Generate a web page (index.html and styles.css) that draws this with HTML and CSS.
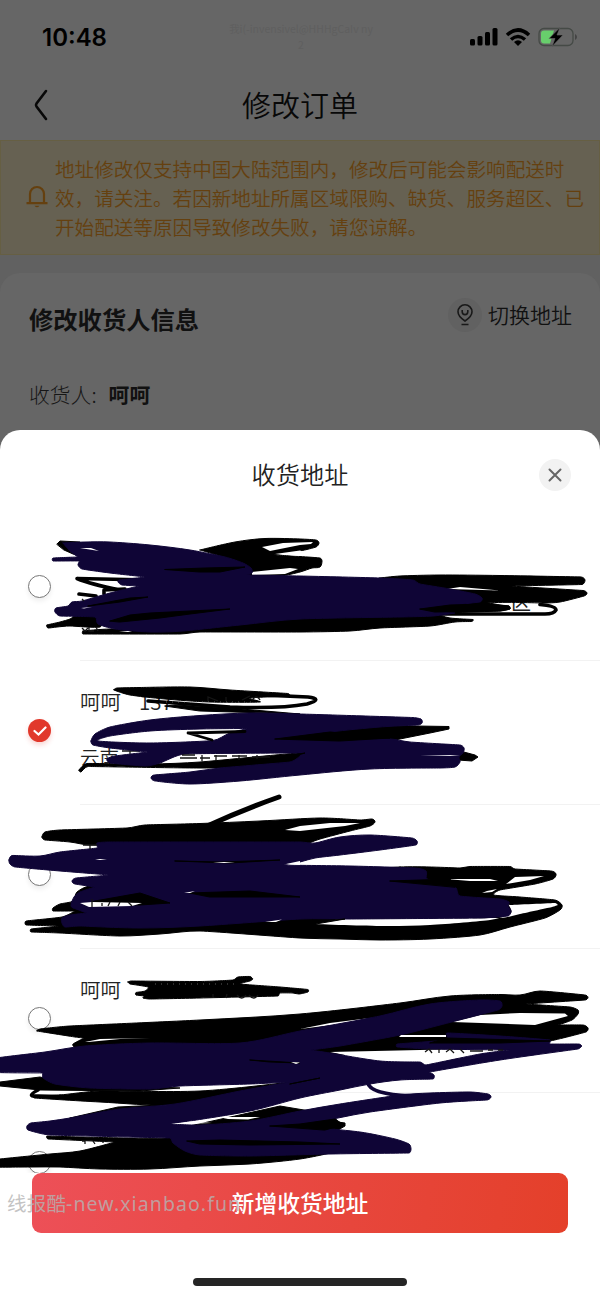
FILE: index.html
```html
<!DOCTYPE html>
<html lang="zh-CN">
<head>
<meta charset="utf-8">
<title>修改订单</title>
<link rel="stylesheet" href="styles.css">
</head>
<body>
<div class="screen">
  <div class="page">
    <div class="status">
      <span class="time">10:48</span>
      <span class="faint">我i(-invensivel@HHHgCaIv ny<br>2</span>
      <svg class="status-icons" width="108" height="20" viewBox="470 27 108 20">
        <g fill="#000"><rect x="470" y="39" width="5" height="6.500" rx="1.500"/><rect x="477.500" y="36" width="5" height="9.500" rx="1.500"/><rect x="485" y="32" width="5" height="13.500" rx="1.500"/><rect x="492.500" y="28" width="5" height="17.500" rx="1.500"/></g>
        <g fill="none" stroke="#000" stroke-width="3.600"><path d="M507 35Q518 25 529 35"/><path d="M511 39.500Q518 33.500 525 39.500"/></g>
        <path d="M514 42Q518 38.500 522 42L518 46Z"/>
        <rect x="539" y="28.500" width="34" height="17" rx="5" fill="none" stroke="#454a46" stroke-width="1.300"/>
        <path d="M544 30.500h10l-4 13h-6q-3 0-3-3v-7q0-3 3-3z" fill="#68ce6c"/>
        <path d="M575 34q2 1 2 3t-2 3z" fill="#444"/>
        <path d="M560 27.500L549 38.500h6L552 46.500 563 35h-6z" stroke="#666" stroke-width=".6"/>
      </svg>
    </div>
    <div class="nav">
      <svg class="back" width="16" height="32" viewBox="0 0 16 32"><path d="M13 2L3.500 14.500q-1 1.500 0 3L13 30" fill="none" stroke="#080808" stroke-width="2.600" stroke-linecap="round"/></svg>
      <span class="nav-title">修改订单</span>
    </div>
    <div class="notice">
      <svg class="bell" width="22" height="24" viewBox="0 0 22 24"><path d="M4 18V9a7 7 0 0 1 14 0v9M0.500 18.200h21" fill="none" stroke="#65400f" stroke-width="2.200"/><path d="M8.500 20.800h5q-2.500 3-5 0z" fill="#65400f"/></svg>
      <p class="notice-text">地址修改仅支持中国大陆范围内，修改后可能会影响配送时<br>效，请关注。若因新地址所属区域限购、缺货、服务超区、已<br>开始配送等原因导致修改失败，请您谅解。</p>
    </div>
    <div class="card">
      <div class="card-head">
        <h2>修改收货人信息</h2>
        <div class="switch">
          <span class="pin"><svg width="20" height="24" viewBox="0 0 20 24"><path d="M10 18Q3 13.500 3 8.800a7 7 0 0 1 14 0Q17 13.500 10 18zM7.200 7v1.800a2.800 2.800 0 0 0 5.600 0V7M6.500 21.500h7" fill="none" stroke="#191919" stroke-width="1.600"/></svg></span>
          <span>切换地址</span>
        </div>
      </div>
      <div class="person"><span>收货人:</span><b>呵呵</b></div>
    </div>
  </div>

  <div class="sheet">
    <div class="sheet-head">
      <span>收货地址</span>
      <span class="close"><svg width="14" height="14" viewBox="0 0 14 14"><path d="M1.500 1.500l11 11M12.500 1.500l-11 11" stroke="#666" stroke-width="2" stroke-linecap="round"/></svg></span>
    </div>
    <div class="list">
      <div class="row"><i class="radio"></i><div class="info"></div></div>
      <div class="row"><i class="radio on"><svg width="14" height="12" viewBox="0 0 14 12"><path d="M1.500 6l4 3.500L12.500 2.500" fill="none" stroke="#fff" stroke-width="2.200" stroke-linecap="round"/></svg></i><div class="info"><div class="name"><span>呵呵</span><span class="tel">137</span></div><div class="addr">云南</div></div></div>
      <div class="row"><i class="radio"></i><div class="info"></div></div>
      <div class="row"><i class="radio"></i><div class="info"><div class="name"><span>呵呵</span></div></div></div>
      <div class="row"><i class="radio"></i><div class="info"></div></div>
      <svg class="ink" width="600" height="657" viewBox="0 516 600 657">
        <!-- first address -->
        <text x="511" y="609.500" class="peek">区</text>
        <g class="k">
          <path d="M57 544L60 541 80 542 85 556 73 554 64 550zM200 550L235 542 265 538.500 300 539 316 540 319 543 316 547 300 551 274 555 300 556.500 320 558 322 561 320 567 312 568 300 572 280 576 250 576 230 560z"/>
          <path d="M47 625L60 622 70 619 75 616 100 616 100 627 70 626 57 627 48 628zM83 631L110 629 183 629 300 615 433 614 450 618 473 619.500 472 621.500 455 622 430 626 380 628 350 631 300 632 200 632 180 634 83 634z"/>
          <path d="M380 578L400 576 440 575 500 575.500 581 577 585 580 582 584.500 510 586 583 590.500 587 593 584 596 560 602 543 603 487 603 430 612 400 610z"/>
          <path class="line" d="M150 580L77 578.500Q90 584 120 590M79 594L96 596M104 594V590L125 589M540 604.500Q556 606 556 610Q554 614 545 614L435 614"/>
          <path d="M420 609L450 604 487 603 500 605 509 606 510 609 500 611 435 613z"/>
        </g>
        <path class="w" d="M447 589L460 587 500 590.500zM262 547L283 543 313 542 311 544 300 545 270 551zM275 554L300 550.500 306 553 300 556zM252 572L290 568 298 569 285 574 252 575z"/>
        <g class="n">
          <path d="M63 543L85 542 110 542 150 545 190 550 225 557 243 563 251 568 252 573 247 575 300 576 380 578 413 580 420 584 450 589 475 594 482 598 480 602 420 609 455 613 433 616 400 617 300 619 240 625 183 631 150 632 115 629 98 624 95 617 60 616 55 612 56 608 68 606 72 602 82 601 110 593 139 586 122 585 118 582 119 580 146 577 110 573 82 569 78 565 79 561 53 561 53 558 78 557 70 551z"/>
        </g>
        <g class="k"><path d="M110 621L130 615 150 613 230 609 190 614 160 618 120 622zM165 569.500L205 568 245 567 220 572 200 572zM88 606L130 598 148 597 120 602zM420 609L450 605 487 604 509 606 510 609 500 611 435 612z"/></g>
        <path class="w" d="M80 548L91 548 99 551zM81 608L92 607 84 608.500zM119 631L132 631 128 632z"/>
        <path class="mark" d="M82 599l2 2M82 628l3 3 3-3M89 627v4h5M96 627l2 4"/>
        <!-- second address -->
        <g class="k">
          <path d="M114 690L117 688 140 687.500 190 687 230 690 288 693.500 290 696 250 698 260 702 210 702 165 699 130 695zM165 706L175 705 230 708 300 714 200 711z"/>
          <path class="line" d="M240 694L308 697Q324 699 307 704Q280 709 230 707L148 701"/>
          <path d="M79 770L87 763.500 150 764 200 762 300 753 300 767 200 768 88 766.500 81 772zM280 738L350 725 449 726.500 449 729 430 733 395 740zM460 751L475 755 478 757 472 761 458 760z"/>
        </g>
        <path class="mark" d="M122 751h18M130 751v5"/>
        <path class="n" fill-rule="evenodd" d="M91 741L95 734 110 727 150 720 200 715.500 250 713 300 714 412 717.500 421 719 422 723 418 725 380 727 330 732 285 739 330 739 390 739 410 742 460 745 464 748 463 753 459 757 460 762 455 767 440 768 370 769 300 775 240 781 190 784 155 781 151 778 154 775 190 772 220 768 290 762 300 756 300 753 185 754 160 763 145 766 110 763 107 759 115 756 148 752 110 748 93 745zM98 741L110 736 150 731 200 729 248 728.500 230 733 213 740.500 150 743z"/>
        <path class="mark" d="M180 758h17M182 755h13M200 758h10M202 755v6M214 756h13M216 755v6M232 756h15M239 755v5M252 757h18M257 755v4M208 701v-4l10 4M226 697v4M242 700l8-4M252 700q5-6 8 0"/>
        <path class="k" d="M275 739L330 732 390 738 340 741zM280 757L305 753 288 758z"/>
        <path class="k line slim" d="M188 733L245 731.500M188 733L212 740"/>
        <path class="w" d="M420 755.500L460 755 450 756z"/>
        <!-- third address -->
        <path class="k line thick" d="M279 797Q242 810 205 827"/>
        <g class="k">
          <path d="M42 837L45 832 60 830 127 828 145 825 200 823.500 260 821 320 818 360 820 372 819 375 822 370 826 350 831 320 839 300 845 90 845 70 842 45 840z"/>
          <path d="M400 867L460 868 470 866.500 510 866.500 515 869 551 871 556 874 553 879 535 884 500 890 494 895 520 897 555 900 562 905 560 910 545 918 510 927 480 935 430 939 380 940 340 939 300 938 200 931 160 934 120 936 60 933 31 932 31 929 60 926 26 925 26 921 62 917 75 911 53 911 53 908 60 904 73 901 77 892 90 886z"/>
        </g>
        <path class="w" d="M310 924L345 919 500 918 520 914 552 907 558 905 555 903 510 905 507 903 511 913 490 920 430 925 380 926zM300 826L330 823 360 823 345 826 300 831 285 830zM446 879L490 879 498 881 470 881zM506 884L515 877 544 876 530 880zM482 893L487 891 497 889 492 892z"/>
        <path class="n" d="M9 860L11 856 15 855.500 40 856 60 852 97 848 97 843 110 842 300 842 315 843 340 837 370 835 412 838 417 841 416 845 380 850 340 855 315 858 300 862 285 865 350 866 415 868 426 871 427 879 455 887 460 896 500 899 509 902 508 906 511 911 508 916 480 918 350 919 300 919 200 926 140 928 80 926 65 927 62 923 62 918 70 915 87 913 76 909 71 906 74 897 80 892 95 887 75 884 72 881 76 878 110 875 60 871 15 867 10 864z"/>
        <path class="k" d="M190 893L250 891 300 897 210 897zM95 901L140 893 170 903 140 905 85 905zM175 861L230 863 280 860 220 862zM390 881L450 879 455 887zM300 923L345 919 310 925 270 923z"/>
        <path class="w" d="M213 862L235 862 224 863zM95 859L107 859 100 860zM286 864L300 861 300 865zM184 893L195 891 190 893zM265 922L282 919.500 276 922zM80 903L92 902 142 903 132 906 89 907z"/>
        <path class="mark" d="M83 845h14M90 845v4M92 899v8M102 903v3M110 902l-2 4M120 902l-2 4M128 902l4 4"/>
        <!-- fourth and fifth address -->
        <g class="k">
          <path d="M128 982L131 981 200 981.500 233 980 238 977 250 976.500 253 979 250 981 241 984 280 987 308 989.500 308 992 299 994 293 993 280 993 278 996 200 998 150 999 143 998 144 996 136 995 136 992.500 145 991 148 987 130 984z"/>
          <path d="M37 1031L40 1029 70 1026 200 1020 300 1014 400 1003 450 996 500 994.500 520 995 540 991 585 995 588 997.500 585 1000 525 1004 570 1007 578 1010 578 1014 572 1020 558 1025 583 1025 588 1028 586 1032 550 1041 500 1050 400 1053 300 1055 80 1050 74 1047 73 1044 84 1038 75 1037z"/>
          <path d="M0 1082L40 1077 60 1082 180 1088 140 1091 40 1090 0 1086zM60 1095L100 1091 200 1091 290 1082 260 1095 175 1105 100 1102 34 1098 34 1096zM70 1118L118 1107 160 1105 160 1118zM235 1116L280 1106 310 1111 270 1124 190 1126zM290 1124L335 1118 338 1122 345 1123 345 1126 338 1130 300 1131z"/>
          <path d="M-9 1160L50 1154 80 1151 115 1142 48 1139 47 1136 170 1138 300 1130 335 1152 300 1159 250 1164 200 1166 150 1169 100 1169 60 1167 32 1167 -9 1167z"/>
          <path class="line" d="M38 1090Q25 1097 38 1096L80 1097"/>
        </g>
        <path class="w" d="M300 1029L330 1023 370 1018 340 1024zM452 1022L480 1015 520 1013 565 1013.500 568 1016 535 1025zM330 1052L511 1048 430 1067 380 1062z"/>
        <path class="n" d="M-9 1059L45 1052 85 1046 150 1043 240 1043 300 1031 380 1016 430 1004 480 1000 500 1001 502 1006 498 1010 440 1025 400 1035 340 1046 310 1050 330 1053 380 1061 420 1062 426 1065 480 1054 510 1050 430 1049 397 1047 397 1044 447 1040 447 1033 500 1036 550 1040 550 1044 579 1044 582 1046 578 1049 500 1060 430 1072 434 1075 433 1079 400 1080 370 1084 340 1090 300 1098 250 1111 190 1121 171 1124 200 1125 250 1121 300 1111 340 1104 400 1095 430 1093 470 1092 488 1094 491 1097 487 1100 440 1103 370 1112 338 1118 300 1126 360 1132 395 1139 409 1144 411 1149 409 1153 330 1154 250 1156 200 1155 185 1151 173 1143 170 1138 50 1135 28 1130 27 1126 31 1123 50 1121 70 1118 120 1109 175 1104 240 1091 290 1082 250 1084 180 1086 150 1089 90 1088 55 1084 43 1078 42 1073 -9 1072z"/>
        <path class="n thin" d="M368 1083Q370 1094 410 1096"/>
        <path class="k" d="M447 1038L550 1041 500 1043 430 1043zM187 1141L220 1140 300 1142 340 1144 250 1145 200 1144zM270 1126L300 1124 335 1119 344 1125 325 1130zM250 1060L300 1063 270 1062zM290 1084L320 1078 300 1082z"/>
        <path class="w" d="M401 1035L446 1035 446 1037 399 1037zM85 1042L100 1039 150 1038 120 1039 88 1042zM171 1124L190 1121.500 212 1123 180 1124zM218 1117L260 1117 248 1119.500 228 1119zM291 1062L300 1062.500 296 1064z"/>
        <path class="mark" d="M425 1052l4-3 3 4M439 1049v4M446 1052l4-3 4 4M460 1049l4 4M470 1051h13M488 1050h5M498 1050h5M82 1141h3v3M93 1141l2 3M103 1141v2M213 994v4M227 994l-1 4M237 995q5 6 9 0M249 995q5 6 9 0"/>
        <path class="speck" d="M155 984h80M166 702h88"/>
      </svg>
    </div>
    <div class="footer">
      <button class="add">新增收货地址</button>
      <span class="mark-text"><span>线报酷</span>-new.xianbao.fun</span>
    </div>
    <div class="home"></div>
  </div>
</div>
<script src="ink.js"></script>
</body>
</html>
```
FILE: ink.js
```js
// Rounds the corners of the large closed ink outlines so they look drawn by a pen.
const dist = (a, b) => Math.hypot(a[0] - b[0], a[1] - b[1]);
const pair = (p) => p.join(' ');

function outline(points) {
  const n = points.length;
  if (n < 8) return 'M' + points.map(pair).join('L') + 'z';
  const tangents = points.map((p, i) => {
    const a = points[(i + n - 1) % n];
    const b = points[(i + 1) % n];
    const span = dist(a, b) || 1;
    // Sharp tips between long edges keep their point.
    const fold = span / (dist(a, p) + dist(p, b));
    const reach = fold < 0.6 ? 0 : Math.min(dist(a, p), dist(p, b)) * 0.33;
    return [(b[0] - a[0]) / span * reach, (b[1] - a[1]) / span * reach];
  });
  let d = 'M' + pair(points[0]);
  for (let i = 0; i < n; i++) {
    const j = (i + 1) % n;
    const [p, q, s, t] = [points[i], points[j], tangents[i], tangents[j]];
    d += `C${p[0] + s[0]} ${p[1] + s[1]} ${q[0] - t[0]} ${q[1] - t[1]} ${q[0]} ${q[1]}`;
  }
  return d + 'z';
}

document.querySelectorAll('.ink path').forEach((path) => {
  const d = path.getAttribute('d');
  if (!/^[MLz\d.\s-]+z$/.test(d)) return;
  path.setAttribute('d', d.split('z').filter(Boolean).map((part) => {
    const v = part.match(/-?[\d.]+/g).map(Number);
    const points = [];
    for (let i = 0; i < v.length; i += 2) points.push([v[i], v[i + 1]]);
    return outline(points);
  }).join(''));
});
```
FILE: styles.css
```css
* { box-sizing: border-box; }
body { margin: 0; font-family: "Noto Sans CJK SC", sans-serif; color: #222; }
.screen { width: 600px; height: 1299px; background: #616161; overflow: hidden; display: flex; flex-direction: column; }
.page { height: 430px; display: flex; flex-direction: column; flex: none; }
.status { height: 70px; background: #666; display: flex; justify-content: space-between; padding: 27px 22px 0 42px; position: relative; }
.time { font: 600 24px/21px Inter, sans-serif; color: #000; letter-spacing: 0; }
.faint { position: absolute; left: 226px; top: 21px; width: 150px; text-align: center; font-size: 10.500px; line-height: 16px; color: #5f5f5f; white-space: nowrap; }
.nav { height: 70px; background: #666; display: flex; align-items: center; justify-content: center; position: relative; }
.back { position: absolute; left: 33px; top: 19px; }
.nav-title { font-size: 29px; font-weight: 350; color: #080808; line-height: 40px; padding-bottom: 3px; }
.notice { height: 115px; background: #666152; border: 1px solid #665f43; display: flex; align-items: center; padding: 0 0 1px 25px; gap: 7px; flex: none; }
.bell { flex: none; }
.notice-text { margin: 0; font-size: 19.6px; line-height: 29px; font-weight: 350; color: #65400f; white-space: nowrap; }
.card { margin-top: 18px; flex: 1; background: #666; border-radius: 20px 20px 0 0; padding: 21px 28px 0 29px; }
.card-head { display: flex; justify-content: space-between; height: 50px; }
h2 { margin: 0; font-size: 24.300px; line-height: 50px; font-weight: 700; color: #111; }
.switch { display: flex; gap: 6px; align-items: center; height: 42px; font-size: 21px; line-height: 30px; color: #111; font-weight: 350; }
.switch > span:last-child { padding-bottom: 2px; }
.pin { width: 34px; height: 34px; border-radius: 50%; background: #616161; display: flex; align-items: center; justify-content: center; }
.person { margin-top: 34px; display: flex; gap: 12px; font-size: 20.8px; line-height: 32px; font-weight: 300; color: #161616; }
.person b { font-weight: 700; color: #111; }
.sheet { height: 869px; background: #fff; border-radius: 20px 20px 0 0; display: flex; flex-direction: column; flex: none; box-shadow: 0 -20px 0 20px #666; clip-path: inset(-1px 0 0 0); }
.sheet-head { height: 87px; line-height: 88px; text-align: center; font-size: 24.200px; font-weight: 350; position: relative; flex: none; }
.close { position: absolute; right: 29px; top: 29px; width: 32px; height: 32px; border-radius: 50%; background: #f2f2f2; display: flex; align-items: center; justify-content: center; }
.list { height: 656px; overflow: hidden; position: relative; flex: none; }
.row { height: 144px; display: flex; padding-left: 28px; }
.radio { width: 23px; height: 23px; border: 1.500px solid #777; border-radius: 50%; margin-top: 58px; flex: none; box-shadow: 0 3px 5px #0001; background: #fff; }
.radio.on { background: #e1382b; border: 0; display: flex; align-items: center; justify-content: center; box-shadow: 0 3px 5px #e1382b33; }
.info { flex: 1; margin-left: 29px; border-bottom: 1px solid #f2f2f2; padding-top: 25px; }
.name { display: flex; gap: 18px; font-size: 20.5px; line-height: 30px; height: 30px; font-weight: 350; }
.addr { margin-top: 26px; font-size: 19.500px; line-height: 30px; font-weight: 350; }
.ink { position: absolute; left: 0; top: -1px; }
.k { fill: #000; stroke: #000; stroke-width: 1; stroke-linejoin: round; stroke-linecap: round; }
.line { fill: none; stroke-width: 3.600; }
.slim { stroke-width: 2.800; }
.thick { stroke-width: 5; }
.n { fill: #0f0536; stroke: #0f0536; stroke-width: 1; stroke-linejoin: round; stroke-linecap: round; }
.thin { fill: none; stroke-width: 4; }
.w { fill: #fff; }
.peek { font-size: 20px; fill: #222; }
.mark { fill: none; stroke: #151515; stroke-width: 1.300; }
.speck { stroke: #999; stroke-width: .6; stroke-dasharray: 1 5; }
.footer { padding: 0 32px; position: relative; flex: none; }
.add { display: block; width: 536px; height: 60px; border: 0; border-radius: 9px; background: linear-gradient(100deg, #ed5058, #e7463c 60%, #e4402a); color: #fff; font: 500 22.800px/60px "Noto Sans CJK SC", sans-serif; padding: 0; }
.mark-text { position: absolute; left: 7px; top: 15px; font: 19.500px/30px "Noto Sans", sans-serif; color: #b4b4b4cc; white-space: nowrap; letter-spacing: 1.080px; }
.mark-text span { font-family: "Noto Sans CJK SC", sans-serif; letter-spacing: .2px; }
.home { width: 214px; height: 8px; border-radius: 4px; background: #252525; margin: 45px auto 0; }
```
